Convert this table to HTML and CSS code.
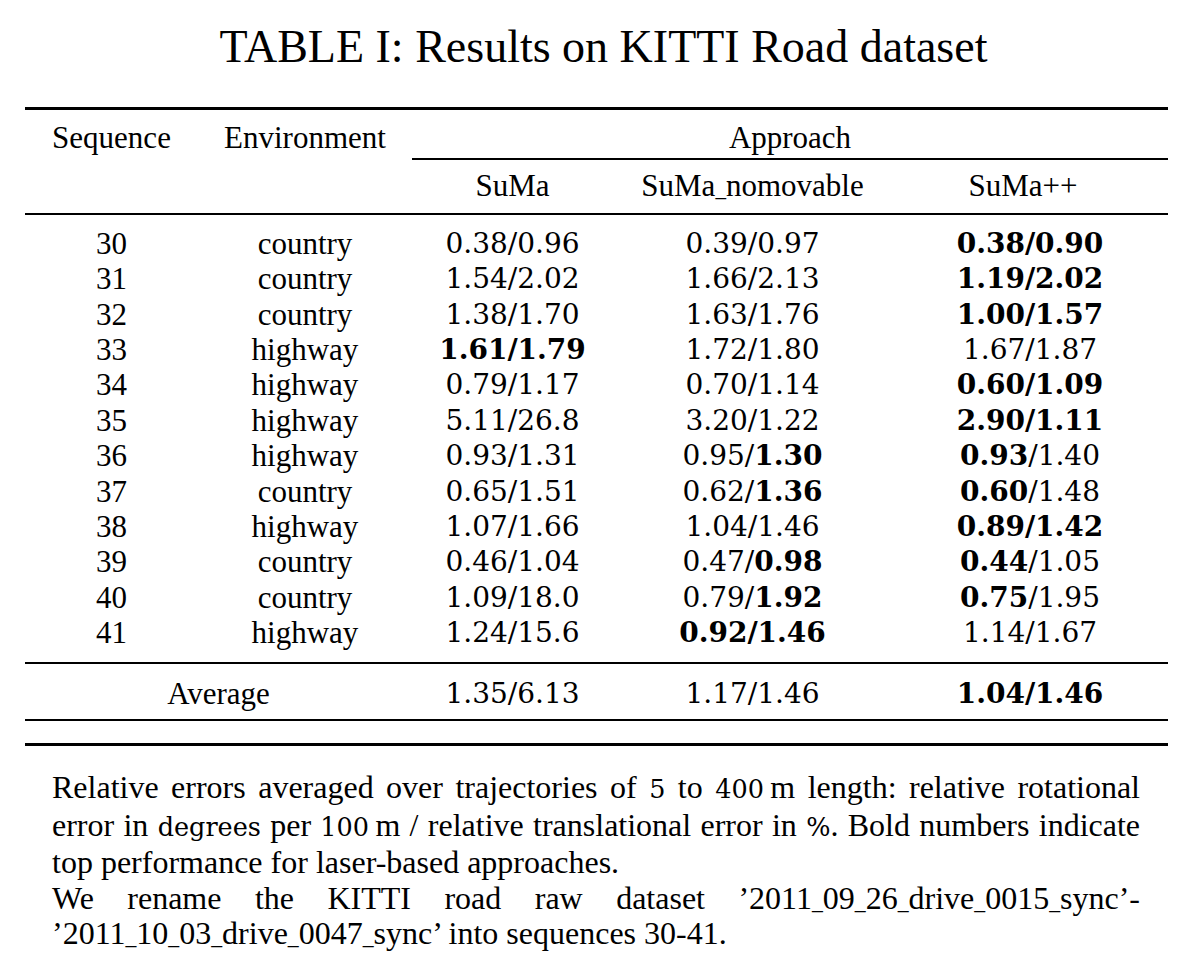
FILE: index.html
```html
<!DOCTYPE html>
<html lang="en">
<head>
<meta charset="utf-8">
<title>TABLE I: Results on KITTI Road dataset</title>
<link rel="stylesheet" href="styles.css">
</head>
<body>
<div class="page">
  <h1 class="title">TABLE I: Results on KITTI Road dataset</h1>
  <div class="tbl">
    <div class="hrow1">
      <div class="c">Sequence</div>
      <div class="c">Environment</div>
      <div class="c approach">Approach</div>
    </div>
    <div class="hrow2">
      <div></div>
      <div></div>
      <div class="c">SuMa</div>
      <div class="c">SuMa<span class="us">_</span>nomovable</div>
      <div class="c pp">SuMa++</div>
    </div>
    <div class="tbody">
      <div class="row"><div class="c">30</div><div class="c">country</div><div class="c num">0.38/0.96</div><div class="c num">0.39/0.97</div><div class="c num"><b>0.38/0.90</b></div></div>
      <div class="row"><div class="c">31</div><div class="c">country</div><div class="c num">1.54/2.02</div><div class="c num">1.66/2.13</div><div class="c num"><b>1.19/2.02</b></div></div>
      <div class="row"><div class="c">32</div><div class="c">country</div><div class="c num">1.38/1.70</div><div class="c num">1.63/1.76</div><div class="c num"><b>1.00/1.57</b></div></div>
      <div class="row"><div class="c">33</div><div class="c">highway</div><div class="c num"><b>1.61/1.79</b></div><div class="c num">1.72/1.80</div><div class="c num">1.67/1.87</div></div>
      <div class="row"><div class="c">34</div><div class="c">highway</div><div class="c num">0.79/1.17</div><div class="c num">0.70/1.14</div><div class="c num"><b>0.60/1.09</b></div></div>
      <div class="row"><div class="c">35</div><div class="c">highway</div><div class="c num">5.11/26.8</div><div class="c num">3.20/1.22</div><div class="c num"><b>2.90/1.11</b></div></div>
      <div class="row"><div class="c">36</div><div class="c">highway</div><div class="c num">0.93/1.31</div><div class="c num">0.95/<b>1.30</b></div><div class="c num"><b>0.93</b>/1.40</div></div>
      <div class="row"><div class="c">37</div><div class="c">country</div><div class="c num">0.65/1.51</div><div class="c num">0.62/<b>1.36</b></div><div class="c num"><b>0.60</b>/1.48</div></div>
      <div class="row"><div class="c">38</div><div class="c">highway</div><div class="c num">1.07/1.66</div><div class="c num">1.04/1.46</div><div class="c num"><b>0.89/1.42</b></div></div>
      <div class="row"><div class="c">39</div><div class="c">country</div><div class="c num">0.46/1.04</div><div class="c num">0.47/<b>0.98</b></div><div class="c num"><b>0.44</b>/1.05</div></div>
      <div class="row"><div class="c">40</div><div class="c">country</div><div class="c num">1.09/18.0</div><div class="c num">0.79/<b>1.92</b></div><div class="c num"><b>0.75</b>/1.95</div></div>
      <div class="row"><div class="c">41</div><div class="c">highway</div><div class="c num">1.24/15.6</div><div class="c num"><b>0.92/1.46</b></div><div class="c num">1.14/1.67</div></div>
    </div>
    <div class="row avgrow">
      <div class="c avg">Average</div>
      <div class="c num">1.35/6.13</div>
      <div class="c num">1.17/1.46</div>
      <div class="c num"><b>1.04/1.46</b></div>
    </div>
    <div class="spacer"></div>
  </div>
  <div class="notes">
    <p>
      <span class="jl">Relative errors averaged over trajectories of <span class="cm">5</span> to <span class="cm">400</span>&thinsp;m length: relative rotational</span>
      <span class="jl">error in <span class="cm">degrees</span> per <span class="cm">100</span>&thinsp;m / relative translational error in <span class="cm">%</span>. Bold numbers indicate</span>
      top performance for laser-based approaches.
    </p>
    <p>
      <span class="jl">We rename the KITTI road raw dataset ’2011<span class="us">_</span>09<span class="us">_</span>26<span class="us">_</span>drive<span class="us">_</span>0015<span class="us">_</span>sync’-</span>
      ’2011<span class="us">_</span>10<span class="us">_</span>03<span class="us">_</span>drive<span class="us">_</span>0047<span class="us">_</span>sync’ into sequences 30-41.
    </p>
  </div>
</div>
</body>
</html>
```

FILE: styles.css
```css
html, body {
  margin: 0;
  padding: 0;
  background: #ffffff;
  color: #000000;
}

body {
  font-family: "Liberation Serif", "Times New Roman", serif;
}

.page {
  width: 1186px;
  height: 956px;
}

.title {
  margin: 0 0 30px 25px;
  width: 1143px;
  padding: 17px 0 0 14px;
  box-sizing: border-box;
  font-size: 46px;
  font-weight: normal;
  line-height: 60px;
  text-align: center;
}

.tbl {
  margin-left: 25px;
  width: 1143px;
  border-top: 3px solid #000;
  border-bottom: 3px solid #000;
}

.hrow1,
.hrow2,
.row {
  display: grid;
  grid-template-columns: 173px 214px 201px 279px 276px;
}

.c {
  text-align: center;
  font-size: 31px;
  white-space: nowrap;
}

.pp {
  padding-right: 14px;
}

.us {
  font-size: 0.68em;
  line-height: 0;
}

.hrow1 {
  padding-top: 7px;
  line-height: 41px;
}

.approach {
  grid-column: 3 / span 3;
  border-bottom: 2px solid #000;
}

.hrow2 {
  padding: 6px 0 7px;
  line-height: 40px;
  border-bottom: 2px solid #000;
}

.tbody {
  padding: 11px 0 12px;
  border-bottom: 2px solid #000;
}

.row {
  line-height: 35.36px;
}

.num {
  font-family: "DejaVu Serif", serif;
  font-size: 28px;
}

.num b {
  font-weight: bold;
}

.avgrow {
  padding: 12px 0 8px;
  line-height: 35px;
  border-bottom: 2px solid #000;
}

.avg {
  grid-column: 1 / span 2;
}

.spacer {
  height: 22px;
}

.notes {
  margin: 24px 0 0 52px;
  width: 1088px;
  font-size: 32px;
  line-height: 35.5px;
  text-align: justify;
}

.notes p {
  margin: 0;
}

.jl {
  display: block;
  text-align-last: justify;
  word-spacing: -2px;
}

.cm {
  font-family: "DejaVu Serif", serif;
  font-size: 25.5px;
}
```
